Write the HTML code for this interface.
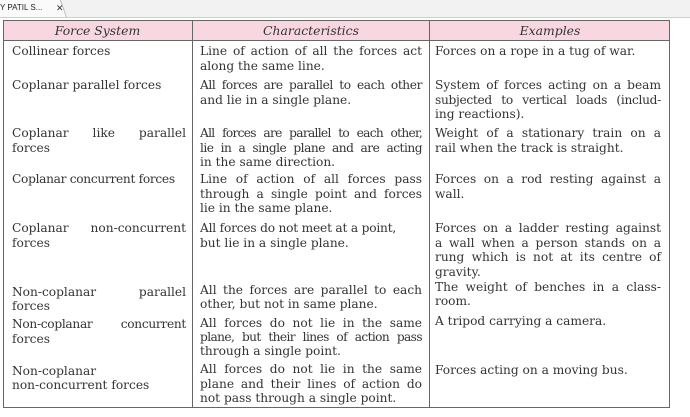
<!DOCTYPE html>
<html><head><meta charset="utf-8"><style>
body{margin:0;width:690px;height:417px;background:#fff;position:relative;overflow:hidden;font-family:"DejaVu Serif",serif;color:#333;font-size:12.2px}
.bar{position:absolute;left:0;top:0;width:690px;height:17px;background:#f2f2f2;border-bottom:1px solid #cfcfcf}
.tab{position:absolute;left:-4px;top:0;width:70px;height:17px;background:#fafafa;border-right:1px solid #bbb;transform:skewX(20deg);transform-origin:bottom}
.tabt{position:absolute;left:0;top:3px;font:8px "Liberation Sans",sans-serif;color:#222}
.tabx{position:absolute;left:56px;top:3px;font:9px "Liberation Sans",sans-serif;color:#333}
.t{position:absolute;left:3px;top:20px;width:667px;height:388px;border:1px solid #666;box-sizing:border-box}
.h{position:absolute;left:3px;top:20px;width:667px;height:21px;background:#f8d7e1;border:1px solid #666;box-sizing:border-box}
.v{position:absolute;top:20px;width:1px;height:388px;background:#666}
.hd{position:absolute;top:23px;font-style:italic;font-size:12.4px;color:#333;text-align:center}
.l{position:absolute;line-height:15px;white-space:nowrap}
.j{text-align:justify;text-align-last:justify;white-space:normal}
.c1{left:12px;width:174px}.c2{left:200px;width:222px}.c3{left:435px;width:226px}
</style></head><body>
<div class="bar"><div class="tab"></div><div class="tabt">Y PATIL S...</div><div class="tabx">✕</div></div>
<div class="t"></div><div class="h"></div>
<div class="v" style="left:192px"></div><div class="v" style="left:429px"></div>
<div class="hd" style="left:3px;width:189px">Force System</div>
<div class="hd" style="left:193px;width:236px">Characteristics</div>
<div class="hd" style="left:430px;width:240px">Examples</div>

<div class="l c1" style="top:44px">Collinear forces</div>
<div class="l c2 j" style="top:44px">Line of action of all the forces act</div>
<div class="l c2" style="top:59px">along the same line.</div>
<div class="l c3" style="top:44px">Forces on a rope in a tug of war.</div>

<div class="l c1" style="top:78px">Coplanar parallel forces</div>
<div class="l c2 j" style="top:78px;letter-spacing:-0.4px">All forces are parallel to each other</div>
<div class="l c2" style="top:93px">and lie in a single plane.</div>
<div class="l c3 j" style="top:78px">System of forces acting on a beam</div>
<div class="l c3 j" style="top:93px;letter-spacing:-0.3px">subjected to vertical loads (includ-</div>
<div class="l c3" style="top:107px">ing reactions).</div>

<div class="l c1 j" style="top:126px">Coplanar like parallel</div>
<div class="l c1" style="top:141px">forces</div>
<div class="l c2 j" style="top:126px;letter-spacing:-0.7px;word-spacing:-1px">All forces are parallel to each other,</div>
<div class="l c2 j" style="top:141px;letter-spacing:-0.5px">lie in a single plane and are acting</div>
<div class="l c2" style="top:155px">in the same direction.</div>
<div class="l c3 j" style="top:126px">Weight of a stationary train on a</div>
<div class="l c3" style="top:141px">rail when the track is straight.</div>

<div class="l c1" style="top:172px;letter-spacing:-0.3px">Coplanar concurrent forces</div>
<div class="l c2 j" style="top:172px">Line of action of all forces pass</div>
<div class="l c2 j" style="top:187px">through a single point and forces</div>
<div class="l c2" style="top:201px">lie in the same plane.</div>
<div class="l c3 j" style="top:172px">Forces on a rod resting against a</div>
<div class="l c3" style="top:187px">wall.</div>

<div class="l c1 j" style="top:221px">Coplanar non-concurrent</div>
<div class="l c1" style="top:236px">forces</div>
<div class="l c2" style="top:221px;letter-spacing:-0.2px">All forces do not meet at a point,</div>
<div class="l c2" style="top:236px">but lie in a single plane.</div>
<div class="l c3 j" style="top:221px">Forces on a ladder resting against</div>
<div class="l c3 j" style="top:236px">a wall when a person stands on a</div>
<div class="l c3 j" style="top:250px">rung which is not at its centre of</div>
<div class="l c3" style="top:265px">gravity.</div>

<div class="l c1 j" style="top:285px">Non-coplanar parallel</div>
<div class="l c1" style="top:299px">forces</div>
<div class="l c2 j" style="top:283px">All the forces are parallel to each</div>
<div class="l c2" style="top:297px">other, but not in same plane.</div>
<div class="l c3 j" style="top:280px">The weight of benches in a class-</div>
<div class="l c3" style="top:294px">room.</div>

<div class="l c1 j" style="top:317px;letter-spacing:-0.3px">Non-coplanar concurrent</div>
<div class="l c1" style="top:332px">forces</div>
<div class="l c2 j" style="top:316px">All forces do not lie in the same</div>
<div class="l c2 j" style="top:330px;letter-spacing:-0.6px;word-spacing:-1px">plane, but their lines of action pass</div>
<div class="l c2" style="top:344px">through a single point.</div>
<div class="l c3" style="top:314px">A tripod carrying a camera.</div>

<div class="l c1" style="top:364px">Non-coplanar</div>
<div class="l c1" style="top:378px">non-concurrent forces</div>
<div class="l c2 j" style="top:362px">All forces do not lie in the same</div>
<div class="l c2 j" style="top:377px">plane and their lines of action do</div>
<div class="l c2" style="top:391px">not pass through a single point.</div>
<div class="l c3" style="top:363px">Forces acting on a moving bus.</div>
</body></html>
